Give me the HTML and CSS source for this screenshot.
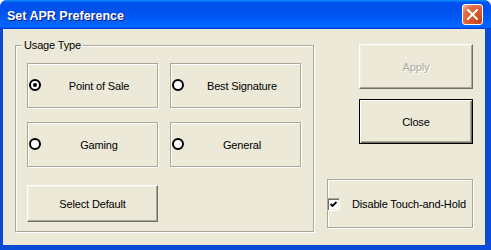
FILE: index.html
```html
<!DOCTYPE html>
<html>
<head>
<meta charset="utf-8">
<link rel="stylesheet" href="styles.css">
</head>
<body>
<div class="window">
  <div class="titlebar">
    <span class="title">Set APR Preference</span>
    <span class="xbtn"><svg width="11" height="11" viewBox="0 0 11 11"><path d="M1 1 L10 10 M10 1 L1 10" stroke="#fff" stroke-width="2" stroke-linecap="square"/></svg></span>
  </div>
  <div class="client">
    <fieldset class="group usage">
      <legend>Usage Type</legend>
      <div class="options">
        <div class="option"><span class="radio checked"></span><span class="opt-label">Point of Sale</span></div>
        <div class="option"><span class="radio"></span><span class="opt-label">Best Signature</span></div>
        <div class="option"><span class="radio"></span><span class="opt-label">Gaming</span></div>
        <div class="option"><span class="radio"></span><span class="opt-label">General</span></div>
      </div>
      <div class="btn select-default">Select Default</div>
    </fieldset>
    <div class="side">
      <div class="btn apply">Apply</div>
      <div class="btn close">Close</div>
      <div class="touch">
        <span class="check"><svg width="9" height="9" viewBox="0 0 9 9"><path d="M1.5 4 L3.5 6 L7.5 2" fill="none" stroke="#000" stroke-width="1.8"/></svg></span>
        <span class="touch-label">Disable Touch-and-Hold</span>
      </div>
    </div>
  </div>
</div>
</body>
</html>
```
FILE: styles.css
```css
* { box-sizing: border-box; }
html, body { margin: 0; padding: 0; background: #fff; }
body { font-family: "Liberation Sans", Arial, sans-serif; font-size: 11px; letter-spacing: -0.15px; color: #000; }

.window {
  width: 491px;
  height: 250px;
  display: flex;
  flex-direction: column;
  background: #0a4cd8;
  border-radius: 7px 7px 0 0;
  overflow: hidden;
}

.titlebar {
  height: 29px;
  flex: none;
  display: flex;
  align-items: center;
  padding: 0 8px 0 7px;
  background: linear-gradient(180deg, #0997ff, #0053ee 8%, #0050ee 40%, #0066ff 88%, #0066ff 93%, #005bff 95%, #003dd7 96%, #003dd7);
}
.title {
  flex: 1;
  color: #fff;
  font-family: "Liberation Sans", Arial, sans-serif;
  font-weight: bold;
  font-size: 12.5px;
  letter-spacing: 0;
  padding-top: 3px;
  text-shadow: 1px 1px 0 #0a1883;
}
.xbtn {
  width: 21px;
  height: 21px;
  border: 1px solid #fff;
  border-radius: 3px;
  display: flex;
  align-items: center;
  justify-content: center;
  background: radial-gradient(circle at 85% 85%, #c8441a 0, #dd5c30 50%, #e27651 75%, #f3b49c 95%, #fff 100%);
}

.client {
  flex: 1;
  margin: 0 6px 5px 3px;
  background: #ece9d8;
  display: flex;
  align-items: flex-start;
  padding: 10px 0 0 12px;
}

.group {
  margin: 0;
  width: 299px;
  height: 193px;
  padding: 11px 0 0 11px;
  border: 1px solid #aca899;
  box-shadow: inset 1px 1px 0 #fff, 1px 1px 0 #fff;
  min-width: 0;
}
.group legend {
  margin-left: -5px;
  padding: 0 2px;
  line-height: 13px;
  background: #ece9d8;
}

.options {
  display: grid;
  grid-template-columns: 131px 131px;
  grid-auto-rows: 45px;
  column-gap: 12px;
  row-gap: 14px;
}
.option {
  display: flex;
  align-items: center;
  border: 1px solid #aca899;
  box-shadow: inset 1px 1px 0 #fff, 1px 1px 0 #fff;
}
.radio {
  width: 12px;
  height: 12px;
  margin-left: 1px;
  margin-bottom: 1px;
  border: 2px solid #000;
  border-radius: 50%;
  background: #fff;
  display: flex;
  align-items: center;
  justify-content: center;
}
.radio.checked::after {
  content: "";
  width: 4px;
  height: 4px;
  border-radius: 50%;
  background: #000;
}
.opt-label { flex: 1; text-align: center; }

.btn {
  display: flex;
  align-items: center;
  justify-content: center;
  background: #ece9d8;
  border: 1px solid;
  border-color: #fff #716f64 #716f64 #fff;
  box-shadow: inset -1px -1px 0 #aca899, inset 1px 1px 0 #f1efe2;
}
.select-default {
  width: 131px;
  height: 37px;
  margin-top: 18px;
}

.side {
  margin-left: 13px;
  display: flex;
  flex-direction: column;
}
.apply {
  margin: 5px 0 0 32px;
  width: 114px;
  height: 45px;
  color: #aca899;
  text-shadow: 1px 1px 0 #fff;
}
.close {
  margin: 10px 0 0 32px;
  width: 114px;
  height: 45px;
  border: 1px solid #000;
  box-shadow: inset 1px 1px 0 #fff, inset -1px -1px 0 #716f64, inset -2px -2px 0 #aca899;
}
.touch {
  margin-top: 35px;
  width: 146px;
  height: 49px;
  display: flex;
  align-items: center;
  border: 1px solid #aca899;
  box-shadow: inset 1px 1px 0 #fff, 1px 1px 0 #fff;
}
.check {
  width: 13px;
  height: 13px;
  margin-left: -1px;
  margin-top: 1px;
  background: #fff;
  border: 1px solid;
  border-color: #aca899 #fff #fff #aca899;
  box-shadow: inset 1px 1px 0 #716f64, inset -1px -1px 0 #f1efe2;
  display: flex;
  align-items: center;
  justify-content: center;
}
.touch-label { margin-left: 12px; }
```
